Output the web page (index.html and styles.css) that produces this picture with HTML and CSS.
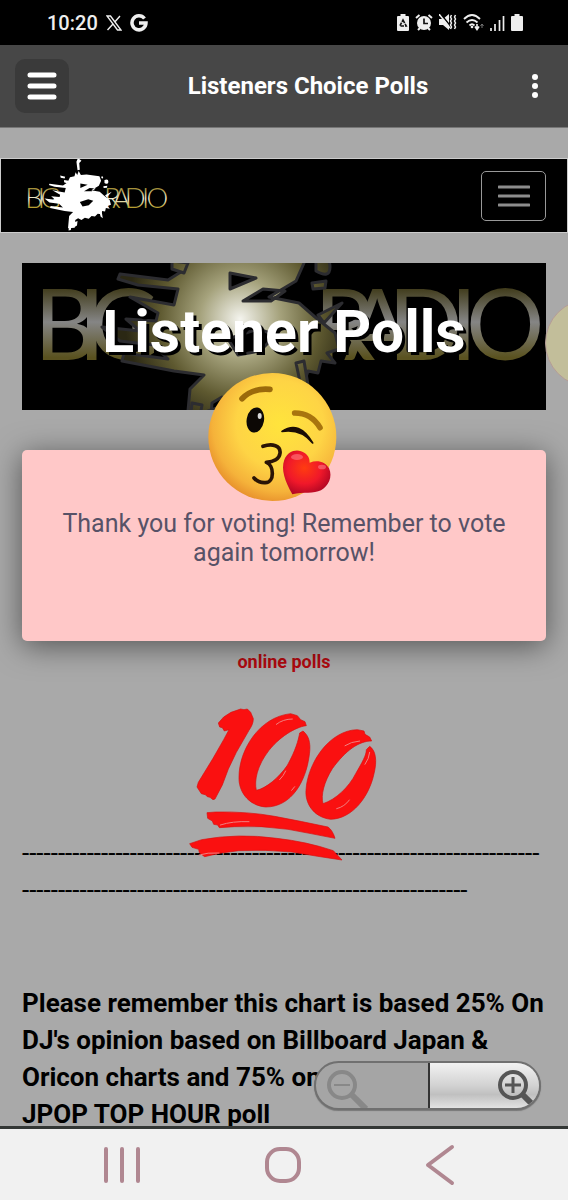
FILE: index.html
```
<!DOCTYPE html>
<html lang="en">
<head>
    <meta charset="UTF-8">
    <meta name="viewport" content="width=device-width, initial-scale=1.0">
    <title>Listeners Choice Polls</title>
    <link rel="stylesheet" href="styles.css">
</head>
<body>
    <!-- Shared logo artwork -->
    <svg class="defs" width="0" height="0" aria-hidden="true">
        <defs>
            <linearGradient id="gold" x1="0" y1="0" x2="0" y2="1">
                <stop offset="0.2" stop-color="#9c872a"/>
                <stop offset="0.55" stop-color="#f4f0d8"/>
                <stop offset="0.8" stop-color="#b59d30"/>
            </linearGradient>
            <linearGradient id="dim-gold" x1="0" y1="0" x2="0" y2="1">
                <stop offset="0.2" stop-color="#3d3816"/>
                <stop offset="0.5" stop-color="#858585"/>
                <stop offset="0.8" stop-color="#5a5220"/>
            </linearGradient>
            <radialGradient id="glow" gradientUnits="userSpaceOnUse" cx="218" cy="56" r="115">
                <stop offset="0" stop-color="#f4f4ee"/>
                <stop offset="0.35" stop-color="#a5a27c"/>
                <stop offset="0.7" stop-color="#5e5930"/>
                <stop offset="1" stop-color="#2b2814"/>
            </radialGradient>
            <g id="logo-letters" font-family="Lato, sans-serif" font-size="98">
                <text x="12 56 66" y="97">BIG</text>
                <text x="292 322 366 428 444" y="97">RADIO</text>
            </g>
            <g id="logo-splash">
                <path fill-rule="evenodd" d="M171-12l16-4 4-14 6 10 5-14 8 14 20-2 46 6 6 16-8 18-27 16 30 6 16 14 20 16 4 16-12 4 8 10-14-2-3 12-10-2-4 12-12-2-10 10-12-2-10 10-14-4-12 8-12-6-10 6-2 28-24 2 4-44 14-14-30-4-52-10 2-8 44 6-14-14-34-4-18-14 38 4-14-12 30 2 2-8-28-16 44 8 4-16-40-4-20-6 2-5 48 6 16-10zM208 10v16l26-11zM221 38l20-12 22 2-14 10zM206 76l30-10 18 6-16 16-22 4z"/>
                <path d="M204-77l8 6-8 8 2 24-8 2-4-30 4-10zM170 140l10 2-6 34-8 2zM186 148l12-4-2 16-10 6zM274 100l8-2 6 36-8-6zM136-18l18 4-2 6-14-2zM294-2q14-6 14 6t-14 4zM290 20l14-2-1 7-12 1zM150-2l16 2-4 10-12-4zM284-16q8 0 4 8-8 0-4-8zM296 52l24-12-18 20z"/>
            </g>
        </defs>
    </svg>

    <div class="app">
        <div class="status-bar">
            <div class="status-left">
                <span class="time">10:20</span>
                <svg width="16" height="16" viewBox="0 0 16 16" fill="none" stroke="#eee"><path d="M1 1h3.500l10.500 14h-3.500zM14 1L9 6.800M7 9L1.500 15" stroke-width="1.400"/></svg>
                <svg width="18" height="18" viewBox="0 0 18 18" fill="none" stroke="#eee" stroke-width="3.500"><path d="M14.500 4.500A7 7 0 1 0 16 9H9"/></svg>
            </div>
            <div class="status-right">
                <svg width="12" height="17" viewBox="0 0 12 17"><path fill="#eee" d="M3.500 0h5v2H11q1 0 1 1v13q0 1-1 1H1q-1 0-1-1V3q0-1 1-1h2.500z"/><path fill="none" stroke="#111" stroke-width="1.600" stroke-dasharray="3.500 1" d="M6 6l3.200 6H2.800z"/></svg>
                <svg width="18" height="17" viewBox="0 0 18 17"><circle cx="9" cy="9" r="7" fill="#eee"/><path d="M1 4l3.500-3M17 4l-3.500-3M3 16l2-2M15 16l-2-2" stroke="#eee" stroke-width="2"/><path d="M9 4.500V9.500h4" fill="none" stroke="#111" stroke-width="1.700"/></svg>
                <svg width="18" height="17" viewBox="0 0 18 17"><path fill="#eee" d="M0 5h4l6-5v16l-6-5H0z"/><path d="M1 -1l12 15" stroke="#000" stroke-width="1.500"/><path d="M0 0l11 14" stroke="#eee" stroke-width="1.500"/><path d="M12.500 1l-1 2 1 2-1 2 1 2-1 2 1 2-1 2M16.500 1l-1 2 1 2-1 2 1 2-1 2 1 2-1 2" fill="none" stroke="#eee" stroke-width="1.500"/></svg>
                <svg width="21" height="17" viewBox="0 0 21 17"><path d="M1 5q8-8 16 0M3.500 8.500q5.500-5 11 0M6.500 11.500q2.500-2.500 5 0" fill="none" stroke="#eee" stroke-width="1.800"/><circle cx="9" cy="13" r="1.300" fill="#eee"/><path d="M14 10v4M12 12.500l2 3 2-3" fill="none" stroke="#eee" stroke-width="1.600"/><path d="M19 14v-4M17.500 12l1.500-2 1.500 2" fill="none" stroke="#777"/></svg>
                <svg width="15" height="16" viewBox="0 0 15 16" stroke="#eee" stroke-width="1.700"><path d="M1 16v-3M5 16V9M9.500 16V5M13.500 16V1"/></svg>
                <svg width="12" height="17" viewBox="0 0 12 17"><path fill="#eee" d="M3.500 0h5v2H11q1 0 1 1v13q0 1-1 1H1q-1 0-1-1V3q0-1 1-1h2.500z"/></svg>
            </div>
        </div>

        <header class="app-bar">
            <button class="menu-btn" type="button" aria-label="Menu">
                <svg width="30" height="28" viewBox="0 0 30 28" stroke="#fff" stroke-width="5" stroke-linecap="round"><path d="M3 3h24M3 14h24M3 25h24"/></svg>
            </button>
            <h1 class="app-title">Listeners Choice Polls</h1>
            <button class="more-btn" type="button" aria-label="More options">
                <svg width="8" height="26" viewBox="0 0 8 26" fill="#fff"><circle cx="4" cy="4" r="3"/><circle cx="4" cy="13" r="3"/><circle cx="4" cy="22" r="3"/></svg>
            </button>
        </header>

        <main class="content">
            <nav class="navbar">
                <a href="#" class="brand" aria-label="Big B Radio">
                    <svg width="147" height="73" viewBox="0 -77 524 260">
                        <use href="#logo-letters" fill="url(#gold)"/>
                        <use href="#logo-splash" fill="#fff"/>
                    </svg>
                </a>
                <button class="toggler" type="button" aria-label="Toggle navigation">
                    <svg width="32" height="24" viewBox="0 0 32 24" stroke="#8c8c8c" stroke-width="3" stroke-linecap="round"><path d="M1 3h30M1 12h30M1 21h30"/></svg>
                </button>
            </nav>

            <section class="banner">
                <svg class="banner-art" viewBox="0 0 524 147" preserveAspectRatio="xMidYMid slice" aria-hidden="true">
                    <use href="#logo-letters" fill="url(#dim-gold)"/>
                    <use href="#logo-splash" fill="url(#glow)" stroke="#2c2c30" stroke-width="3" stroke-linejoin="round"/>
                </svg>
                <h2 class="banner-title">Listener Polls</h2>
            </section>

            <section class="popup">
                <svg class="emoji" width="130" height="130" viewBox="55 35 390 390" aria-hidden="true">
                    <defs>
                        <radialGradient id="face" cx="0.56" cy="0.4" r="0.62">
                            <stop offset="0" stop-color="#ffe43c"/>
                            <stop offset="0.55" stop-color="#fed445"/>
                            <stop offset="0.85" stop-color="#f5b23a"/>
                            <stop offset="1" stop-color="#e8912c"/>
                        </radialGradient>
                        <radialGradient id="heart" cx="0.45" cy="0.4" r="0.6">
                            <stop offset="0" stop-color="#ff3c10"/>
                            <stop offset="0.6" stop-color="#f0182a"/>
                            <stop offset="1" stop-color="#b80824"/>
                        </radialGradient>
                    </defs>
                    <circle cx="248" cy="230" r="192" fill="url(#face)"/>
                    <path d="M157 115q32-33 84-28" fill="none" stroke="#9b6a0b" stroke-width="17" stroke-linecap="round"/>
                    <path d="M315 158q50 0 76 44" fill="none" stroke="#a8740e" stroke-width="17" stroke-linecap="round"/>
                    <ellipse cx="197" cy="179" rx="26" ry="38" fill="#0c0805" transform="rotate(10 197 179)"/>
                    <ellipse cx="210" cy="167" rx="6" ry="9" fill="#d8d8d8"/>
                    <path d="M277 213q52-34 92 35-34-44-92-35z" fill="#1a0d05" stroke="#1a0d05" stroke-width="5" stroke-linejoin="round"/>
                    <path d="M220 258c28-10 54-2 51 21-2 18-21 26-41 27 23 8 26 60-3 61-15 1-27-6-34-14" fill="none" stroke="#2a1405" stroke-width="11" stroke-linecap="round" stroke-linejoin="round"/>
                    <path d="M308 402C286 362 273 328 284 298 295 270 325 263 345 278 357 286 360 297 360 307 383 298 407 304 418 324 430 350 416 378 394 390 373 401 340 394 308 402z" fill="url(#heart)"/>
                    <ellipse cx="322" cy="290" rx="18" ry="9" fill="#ff8c96" opacity="0.5"/>
                    <ellipse cx="397" cy="320" rx="12" ry="7" fill="#ff8c96" opacity="0.5"/>
                </svg>
                <p class="popup-text">Thank you for voting! Remember to vote again tomorrow!</p>
            </section>

            <a href="#" class="polls-link">online polls</a>

            <!-- Hundred points emoji -->
            <svg class="hundred" width="190" height="155" viewBox="60 50 570 465" aria-hidden="true">
                <g fill="#fa1010" stroke="#d90d0d" stroke-width="2" stroke-linejoin="round">
                    <path d="M148 98l16-18 22-14 29-10 10 2 10-2 10 10 8 19c0 14-6 24-13 35l-38 66-24 50-18 48-22 42-6 2-9-7-8-2-6-6-12-3-13-20 4-14 44-72 32-56 16-30-14 4-6-10-8-2z"/>
                    <path d="M412 106C390 108 340 130 300 180 265 225 255 270 262 300 290 295 330 262 355 225 380 180 388 150 392 128L402 122C425 140 425 170 420 200 410 270 370 350 290 350 235 345 208 300 210 260 210 180 270 80 365 70L385 76 395 88 408 94z"/>
                    <path d="M608 152C570 152 530 180 490 235 465 275 455 315 462 340 500 328 540 290 560 250 580 215 592 195 592 178L602 168C620 180 625 210 615 250 600 320 550 385 485 387 430 380 408 335 411 300 415 220 480 120 565 118L585 122 588 132 602 140z"/>
                    <path d="M114 367l26-2q95-2 177 13 80 15 160 32 14 10 21 34-70-14-141-27-80-12-160-8l-46 3-5-8-12-2-4-10-14-8z"/>
                    <path d="M62 460l36-12q110-20 225-4 90 10 170 37l26 28q-70-10-150-24-80-8-160-4-60 6-102 18l-16-12-2-10-20-6z"/>
                </g>
                <g fill="none" stroke="#f08080" stroke-width="3" stroke-linecap="round">
                    <path d="M322 102q20-16 48-16M332 268q12-12 18-26M528 166q18-12 44-14M503 355q24-6 38-26M588 222q12-16 14-36M154 404q36-12 86-10M90 494q25-8 60-6M368 300l9-11"/>
                </g>
            </svg>

            <p class="divider">--------------------------------------------------------------------------------------------------------------------------------------</p>

            <p class="note">Please remember this chart is based 25% On DJ's opinion based on Billboard Japan &amp; Oricon charts and 75% on<br>JPOP TOP HOUR poll</p>

            <div class="bubble"></div>

            <div class="zoom">
                <button class="zoom-out" type="button" aria-label="Zoom out">
                    <svg width="42" height="40" viewBox="0 0 42 40" fill="none" stroke="#888"><circle cx="16" cy="16" r="13" stroke-width="4"/><path d="M26 26l14 14" stroke-width="6"/><path d="M8 16h16" stroke-width="2"/></svg>
                </button>
                <button class="zoom-in" type="button" aria-label="Zoom in">
                    <svg width="42" height="40" viewBox="0 0 42 40" fill="none" stroke="#555"><circle cx="16" cy="16" r="13" stroke-width="4"/><path d="M26 26l14 14" stroke-width="6"/><path d="M8 16h16M16 8v16" stroke-width="3"/></svg>
                </button>
            </div>
        </main>

        <footer class="system-nav">
            <button type="button" aria-label="Recents">
                <svg width="38" height="38" viewBox="0 0 38 38" stroke="#b08791" stroke-width="4" stroke-linecap="round"><path d="M3 3v32M19 3v32M35 3v32"/></svg>
            </button>
            <button type="button" aria-label="Home">
                <svg width="38" height="38" viewBox="0 0 38 38" fill="none" stroke="#b08791" stroke-width="4"><rect x="3" y="3" width="32" height="32" rx="13"/></svg>
            </button>
            <button type="button" aria-label="Back">
                <svg width="30" height="42" viewBox="0 0 30 42" fill="none" stroke="#b08791" stroke-width="4" stroke-linecap="round" stroke-linejoin="round"><path d="M27 3L3 21l24 18"/></svg>
            </button>
        </footer>
    </div>
</body>
</html>
```
FILE: styles.css
```
* {
    box-sizing: border-box;
}

body {
    margin: 0;
    font-family: Roboto, sans-serif;
    background-color: #a9a9a9;
    color: #000;
}

h1, h2, p {
    margin: 0;
}

button {
    background: none;
    border: none;
    padding: 0;
    cursor: pointer;
}

svg {
    display: block;
}

.defs {
    position: absolute;
}

.app {
    display: flex;
    flex-direction: column;
    height: 100vh;
}

/* Phone status bar */
.status-bar {
    display: flex;
    justify-content: space-between;
    align-items: center;
    height: 45px;
    padding: 0 45px 0 47px;
    background-color: #000;
    color: #eee;
}

.status-left, .status-right {
    display: flex;
    align-items: center;
    gap: 8px;
}

.status-right {
    gap: 6px;
}

.time {
    font-size: 20px;
    font-weight: 500;
}

.app-bar {
    display: flex;
    justify-content: space-between;
    align-items: center;
    height: 83px;
    padding: 0 29px 0 15px;
    background-color: #474747;
    border-bottom: 1px solid #777;
}

.menu-btn {
    display: flex;
    justify-content: center;
    align-items: center;
    width: 54px;
    height: 54px;
    border-radius: 10px;
    background-color: #3a3a3a;
}

.app-title {
    flex: 1;
    padding-left: 16px;
    font-size: 24px;
    font-weight: 700;
    text-align: center;
    color: #fff;
}

/* Web page area */
.content {
    position: relative;
    flex: 1;
    min-height: 0;
    overflow: hidden;
    padding-top: 30px;
}

.navbar {
    display: flex;
    justify-content: space-between;
    align-items: center;
    height: 75px;
    padding: 0 21px;
    background-color: #000;
    border: 1px solid #ccc;
}

.brand {
    font-weight: 300;
}

.toggler {
    display: flex;
    justify-content: center;
    align-items: center;
    width: 65px;
    height: 50px;
    border: 1px solid #999;
    border-radius: 5px;
}

.banner {
    position: relative;
    display: flex;
    justify-content: center;
    height: 147px;
    margin: 30px 22px 40px;
    padding-top: 35px;
    background-color: #000;
    overflow: hidden;
}

.banner-art {
    position: absolute;
    inset: 0;
    width: 100%;
    height: 100%;
}

.banner-title {
    position: relative;
    font-size: 59px;
    line-height: 68px;
    font-weight: 700;
    color: #fff;
    text-shadow: 3px 3px 0 #000;
}

.popup {
    position: relative;
    min-height: 191px;
    margin: 0 22px;
    padding: 59px 30px;
    border-radius: 5px;
    background-color: #ffc8c8;
    box-shadow: 0 5px 30px rgba(0, 0, 0, 0.5);
}

.emoji {
    position: absolute;
    top: -78px;
    left: calc(50% - 76px);
}

.popup-text {
    font-size: 25px;
    line-height: 29px;
    text-align: center;
    color: #575267;
}

.polls-link {
    display: block;
    margin-top: 7px;
    font-size: 18px;
    line-height: 27px;
    font-weight: 700;
    text-align: center;
    text-decoration: none;
    color: #b00a10;
}

.hundred {
    position: relative;
    margin: 32px auto -27px;
}

.divider {
    margin: 0 22px;
    font-size: 26px;
    line-height: 37px;
    overflow-wrap: anywhere;
}

.note {
    margin: 76px 22px 0;
    font-size: 26px;
    line-height: 37px;
    font-weight: 700;
}

/* Floating controls */
.bubble {
    position: absolute;
    top: 171px;
    right: -65px;
    width: 88px;
    height: 88px;
    border: 1px solid #b59c96;
    border-radius: 50%;
    background-color: #c2be9a;
}

.zoom {
    position: absolute;
    right: 27px;
    bottom: 16px;
    display: flex;
    width: 227px;
    height: 49px;
    border: 2px solid #707070;
    border-radius: 25px;
    overflow: hidden;
    background-color: #a5a5a5;
    box-shadow: 0 1px 1px #777;
}

.zoom-out, .zoom-in {
    display: flex;
    align-items: center;
    flex: 1 1 50%;
    width: 50%;
    padding: 6px 10px 0;
}

.zoom-in {
    justify-content: flex-end;
    padding-right: 0;
    border-left: 2px solid #333;
    background: linear-gradient(#f2f2f2, #d2d2d2 50%, #c0c0c0 70%, #e2e2e2);
}

/* Android navigation */
.system-nav {
    display: flex;
    justify-content: space-between;
    align-items: center;
    height: 74px;
    padding: 0 113px 0 103px;
    border-top: 3px solid #333735;
    background-color: #f1f1f1;
}
```
